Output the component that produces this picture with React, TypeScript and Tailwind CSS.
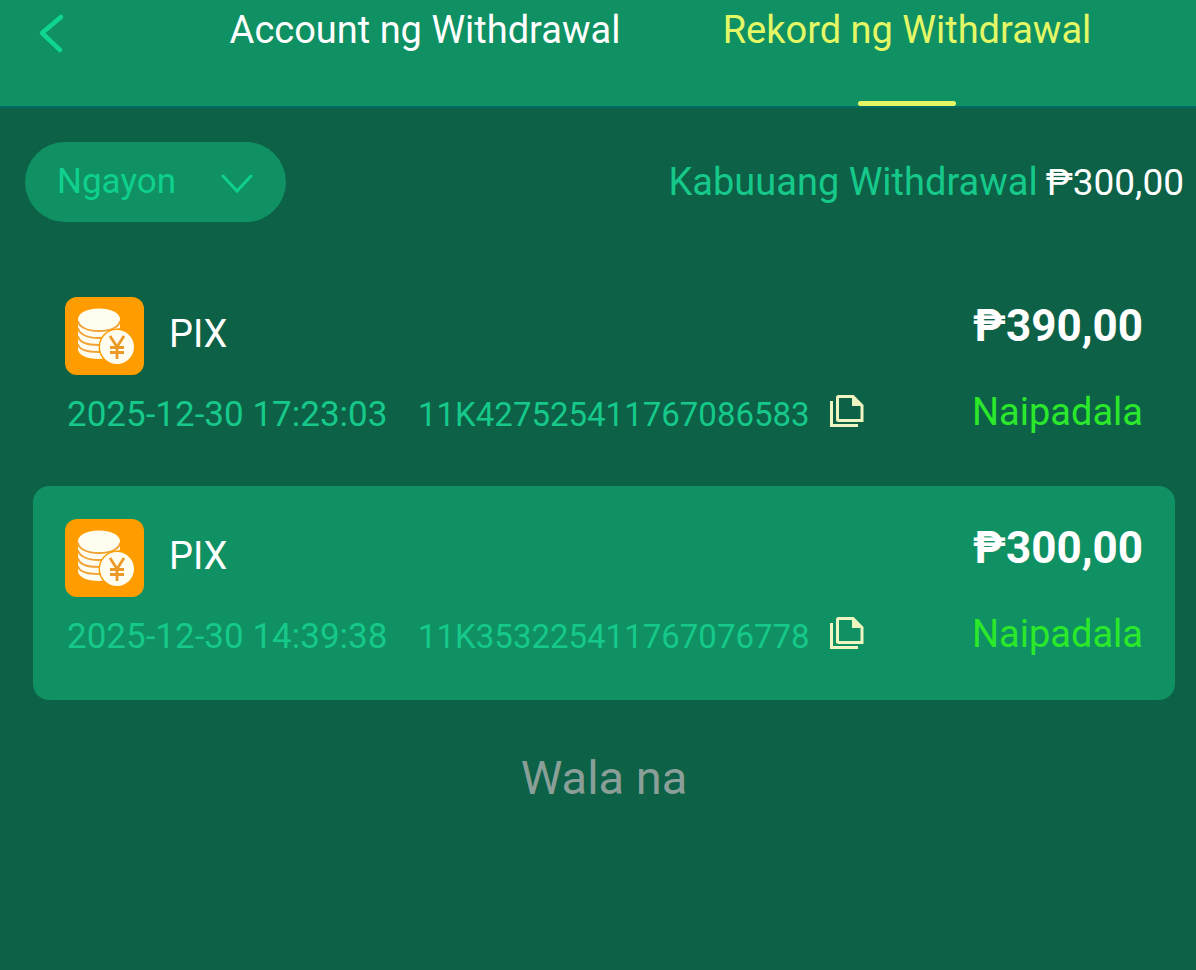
import { useState } from 'react';

type WithdrawalRecord = {
  id: string;
  method: string;
  date: string;
  amount: string;
  status: string;
};

const TABS = ['Account ng Withdrawal', 'Rekord ng Withdrawal'];

const RECORDS: WithdrawalRecord[] = [
  { id: '11K427525411767086583', method: 'PIX', date: '2025-12-30 17:23:03', amount: '₱390,00', status: 'Naipadala' },
  { id: '11K353225411767076778', method: 'PIX', date: '2025-12-30 14:39:38', amount: '₱300,00', status: 'Naipadala' },
];

function CoinsIcon() {
  return (
    <svg viewBox="0 0 79 78" className="w-[79px] h-[78px] shrink-0" aria-hidden="true">
      <rect width="79" height="78" rx="12" fill="#ff9d00" />
      <g fill="#fffdf0">
        <path d="M13 23v29c0 6 9 10 21 10l9-1V35l12-4v-8z" />
        <ellipse cx="34" cy="22" rx="21" ry="10.5" />
      </g>
      <g fill="none" stroke="#f0a234" strokeWidth="1.8">
        <path d="M13 24c1 6 9 10 21 10s20-4 21-10" />
        <path d="M13 31c1 6 9 10 21 10 6 0 11-1 15-3" />
        <path d="M13 39c1 6 9 9 21 9h6" />
        <path d="M13 47c1 6 9 8 21 8h5" />
      </g>
      <circle cx="52" cy="50" r="18.500" fill="#ff9d00" />
      <circle cx="52" cy="50" r="17" fill="#fffdf0" />
      <path d="M45 39l7 11 7-11M52 50v12M45 50.500h14M45 55.500h14" fill="none" stroke="#eb9a28" strokeWidth="2.8" />
    </svg>
  );
}

function CopyIcon() {
  return (
    <svg viewBox="0 0 34 34" className="w-[34px] h-[34px]" fill="none" stroke="#eff5c0" strokeWidth="3" aria-hidden="true">
      <path d="M1.500 7v24.500H28" />
      <path d="M8.500 2.500H23l9 9V26.500H8.500a1 1 0 0 1-1-1v-22a1 1 0 0 1 1-1z" />
      <path d="M22 2v10h10z" fill="#eff5c0" stroke="none" />
    </svg>
  );
}

function RecordCard({ record, striped }: { record: WithdrawalRecord; striped: boolean }) {
  return (
    <li className={`flex justify-between rounded-2xl px-8 pt-[33px] pb-[41px] ${striped ? 'bg-[#0f9163]' : ''}`}>
      <div className="flex flex-col gap-[18px]">
        <div className="flex items-center gap-[25px]">
          <CoinsIcon />
          <span className="text-[38px] leading-10 pb-1 text-white">{record.method}</span>
        </div>
        <div className="flex items-center h-11 pl-0.5 text-[33px] leading-10 text-[#16c98a]">
          <time className="w-[351px] text-[35px]">{record.date}</time>
          <span>{record.id}</span>
          <button
            type="button"
            aria-label="Kopyahin"
            className="ml-5 mb-2 cursor-pointer"
            onClick={() => navigator.clipboard.writeText(record.id)}
          >
            <CopyIcon />
          </button>
        </div>
      </div>
      <div className="flex flex-col items-end justify-between">
        <span className="text-[44px] leading-[58px] font-bold text-white">{record.amount}</span>
        <span className="text-[38px] leading-[50px] text-[#2be82b]">{record.status}</span>
      </div>
    </li>
  );
}

export default function App() {
  const [activeTab, setActiveTab] = useState(1);
  const [range, setRange] = useState('Ngayon');

  return (
    <div className="min-h-screen bg-[#0c6147] font-[Roboto,sans-serif]">
      <header className="flex h-[108px] bg-[#0f9163] border-b-2 border-[#006b63] pr-12">
        <div className="w-[184px] shrink-0 pl-9 pt-3">
          <button type="button" aria-label="Bumalik" className="cursor-pointer">
            <svg viewBox="0 0 30 44" className="w-[30px] h-11" fill="none" stroke="#0fd590" strokeWidth="4.500" strokeLinecap="round" strokeLinejoin="round">
              <path d="M25 5L6 21l18 17" />
            </svg>
          </button>
        </div>
        <nav className="flex-1 grid grid-cols-2">
          {TABS.map((tab, i) => (
            <button
              key={tab}
              type="button"
              onClick={() => setActiveTab(i)}
              className={`flex flex-col items-center justify-between pt-1 text-[38px] leading-[52px] whitespace-nowrap cursor-pointer ${activeTab === i ? 'text-[#e4f765]' : 'text-white'}`}
            >
              {tab}
              {activeTab === i && <span className="w-[98px] h-[5px] rounded-full bg-[#e4f765]" />}
            </button>
          ))}
        </nav>
      </header>

      {/* Filter and total */}
      <section className="flex items-center justify-between pt-[34px] pl-[25px] pr-3">
        <div className="relative">
          <select
            aria-label="Petsa"
            value={range}
            onChange={(e) => setRange(e.target.value)}
            className="appearance-none w-[261px] h-20 pl-8 pr-16 rounded-full bg-[#0f9163] text-[35px] text-[#0fd08c] cursor-pointer"
          >
            <option>Ngayon</option>
            <option>Kahapon</option>
          </select>
          <svg viewBox="0 0 34 20" className="absolute right-8 top-8 w-[34px] h-5 pointer-events-none" fill="none" stroke="#0fd08c" strokeWidth="3" strokeLinecap="round">
            <path d="M3 2l14 15L31 2" />
          </svg>
        </div>
        <p className="flex items-baseline gap-2 text-[38px] leading-[52px] text-[#16c98a]">
          Kabuuang Withdrawal
          <span className="text-[37px] text-white">₱300,00</span>
        </p>
      </section>

      {/* Records */}
      <main className="pl-[33px] pr-[21px] pt-[42px]">
        <ul className="flex flex-col gap-2">
          {RECORDS.map((record, i) => (
            <RecordCard key={record.id} record={record} striped={i % 2 === 1} />
          ))}
        </ul>
        <p className="py-12 text-center text-[47px] leading-[60px] text-[#8a9f97]">Wala na</p>
      </main>
    </div>
  );
}
